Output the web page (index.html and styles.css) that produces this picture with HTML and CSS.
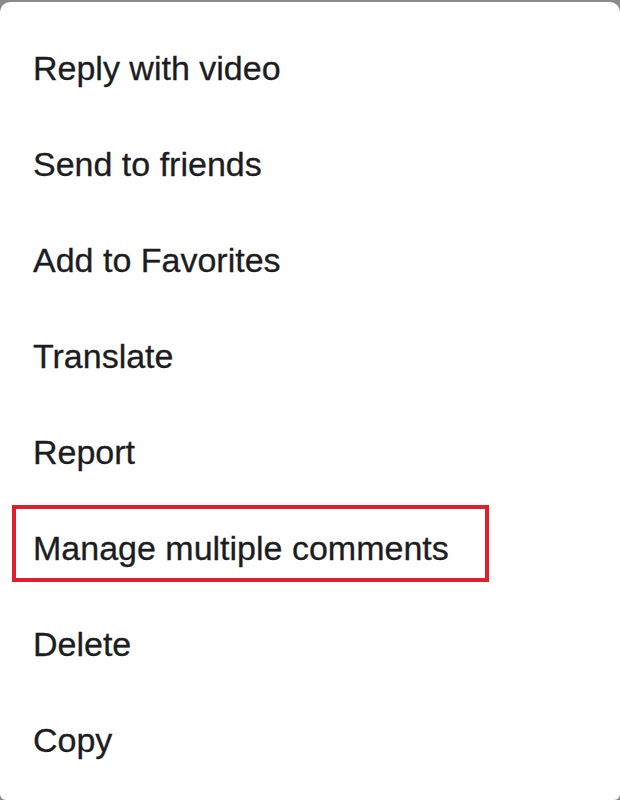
FILE: index.html
```html
<!DOCTYPE html>
<html>
<head>
<meta charset="utf-8">
<link rel="stylesheet" href="styles.css">
</head>
<body>
<div class="sheet">
  <ul class="menu">
    <li class="item">Reply with video</li>
    <li class="item">Send to friends</li>
    <li class="item">Add to Favorites</li>
    <li class="item">Translate</li>
    <li class="item">Report</li>
    <li class="item highlight">Manage multiple comments</li>
    <li class="item">Delete</li>
    <li class="item">Copy</li>
  </ul>
</div>
</body>
</html>
```
FILE: styles.css
```css
html, body {
  margin: 0;
  padding: 0;
  background: #8a8a8a;
}
body {
  width: 620px;
  height: 800px;
  overflow: hidden;
  font-family: "Liberation Sans", Arial, sans-serif;
}
.sheet {
  margin-top: 2px;
  height: 798px;
  background: #ffffff;
  border-radius: 10px 10px 6px 6px;
  box-sizing: border-box;
  padding-top: 18px;
}
.menu {
  list-style: none;
  margin: 0;
  padding: 0;
  display: flex;
  flex-direction: column;
}
.item {
  height: 96px;
  display: flex;
  align-items: center;
  padding-left: 33px;
  font-size: 34px;
  line-height: 39px;
  color: #1c1c22;
  -webkit-text-stroke: 0.3px #1c1c22;
  position: relative;
}
.highlight::after {
  content: "";
  position: absolute;
  left: 12px;
  top: 5px;
  width: 469px;
  height: 69px;
  border: 4px solid #e01e2c;
}
```
